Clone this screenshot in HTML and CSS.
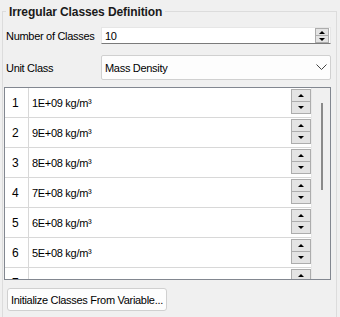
FILE: index.html
```html
<!DOCTYPE html>
<html lang="en">
<head>
  <meta charset="UTF-8">
  <title>Irregular Classes Definition</title>
  <link rel="stylesheet" href="styles.css">
</head>
<body>

  <div class="group">
    <div class="group-title">Irregular Classes Definition</div>

    <div class="field">
      <label>Number of Classes</label>
      <div class="spin-input">
        <span class="value">10</span>
        <div class="spin small">
          <span class="btn up"></span>
          <span class="btn down"></span>
        </div>
      </div>
    </div>

    <div class="field combo-field">
      <label>Unit Class</label>
      <div class="combo">
        <span>Mass Density</span>
        <svg width="11" height="7" viewBox="0 0 11 7"><polyline points="0.5,0.5 5.5,5.5 10.5,0.5" fill="none" stroke="#444" stroke-width="1"/></svg>
      </div>
    </div>

    <div class="table">
      <div class="rows" id="rows">
        <!-- filas geradas por JS -->
      </div>
      <div class="scrollbar"><div class="thumb"></div></div>
    </div>

    <button class="init-btn">Initialize Classes From Variable...</button>
  </div>

  <script>
    const values = ['1E+09', '9E+08', '8E+08', '7E+08', '6E+08', '5E+08', '4E+08', '3E+08'];
    const rows = document.getElementById('rows');
    values.forEach((v, i) => {
      const row = document.createElement('div');
      row.className = 'row';
      row.innerHTML =
        '<div class="num">' + (i + 1) + '</div>' +
        '<div class="val">' + v + ' kg/m³</div>' +
        '<div class="spin"><span class="btn up"></span><span class="btn down"></span></div>';
      rows.appendChild(row);
    });
  </script>
</body>
</html>
```

FILE: styles.css
```css
* {
  box-sizing: border-box;
}
html, body {
  margin: 0;
  padding: 0;
  height: 317px;
  overflow: hidden;
  background: #f0f0f0;
  font-family: "Liberation Sans", Arial, sans-serif;
  font-size: 11px;
  letter-spacing: -0.3px;
  color: #000;
  white-space: nowrap;
}

.group {
  margin: 11px 3px 0 2px;
  border: 1px solid #dcdcdc;
  border-bottom: none;
  padding: 0 5px 0 1px;
  height: 320px;
}

.group-title {
  display: block;
  width: max-content;
  margin: -8px 0 0 2px;
  padding: 0 3px;
  height: 16px;
  line-height: 16px;
  background: #f0f0f0;
  font-weight: bold;
  font-size: 12px;
  letter-spacing: -0.1px;
  color: #1a1a1a;
}

.field {
  display: grid;
  grid-template-columns: 97px 1fr;
  align-items: center;
  margin-top: 7px;
}
.field label {
  padding-left: 2px;
}
.combo-field {
  margin-top: 11px;
}

.spin-input {
  height: 17px;
  background: #fff;
  border: 1px solid #e6e6e6;
  border-bottom: 1px solid #7a7a7a;
  display: flex;
  align-items: center;
  justify-content: space-between;
  padding: 0 1px 0 3px;
}

.combo {
  height: 25px;
  background: #fdfdfd;
  border: 1px solid #d0d0d0;
  border-radius: 2px;
  display: flex;
  align-items: center;
  justify-content: space-between;
  padding: 0 3px 0 3px;
}

.spin {
  display: flex;
  flex-direction: column;
}
.btn {
  display: flex;
  align-items: center;
  justify-content: center;
  width: 20px;
  height: 13px;
  background: #e4e4e4;
  border: 1px solid #adadad;
}
.btn + .btn {
  margin-top: -1px;
}
.btn.up::after, .btn.down::after {
  content: "";
  width: 0;
  height: 0;
  border-left: 3px solid transparent;
  border-right: 3px solid transparent;
}
.btn.up::after {
  border-bottom: 3px solid #000;
}
.btn.down::after {
  border-top: 3px solid #000;
}
.spin.small .btn {
  width: 14px;
  height: 8px;
}

.table {
  margin-top: 7px;
  height: 193px;
  border: 1px solid #828790;
  display: flex;
  background: #fff;
}
.rows {
  flex: 1;
  overflow: hidden;
}
.row {
  display: flex;
  height: 30px;
  border-bottom: 1px solid #d8d8d8;
}
.num {
  width: 24px;
  border-right: 1px solid #d8d8d8;
  padding-left: 7px;
  display: flex;
  align-items: center;
  font-size: 12px;
}
.val {
  flex: 1;
  display: flex;
  align-items: center;
  padding-left: 3px;
}
.row .spin {
  padding-top: 1px;
}

.scrollbar {
  width: 19px;
  background: #f0f0f0;
  border-left: 1px solid #e8e8e8;
  padding: 15px 0 0 9px;
}
.thumb {
  width: 2px;
  height: 87px;
  background: #8a8a8a;
}

.init-btn {
  display: block;
  margin: 8px 0 0 3px;
  height: 23px;
  padding: 0 3px;
  background: #fdfdfd;
  border: 1px solid #d0d0d0;
  border-radius: 3px;
  font-family: inherit;
  font-size: 11px;
  letter-spacing: -0.3px;
  white-space: nowrap;
  color: #000;
}
```
